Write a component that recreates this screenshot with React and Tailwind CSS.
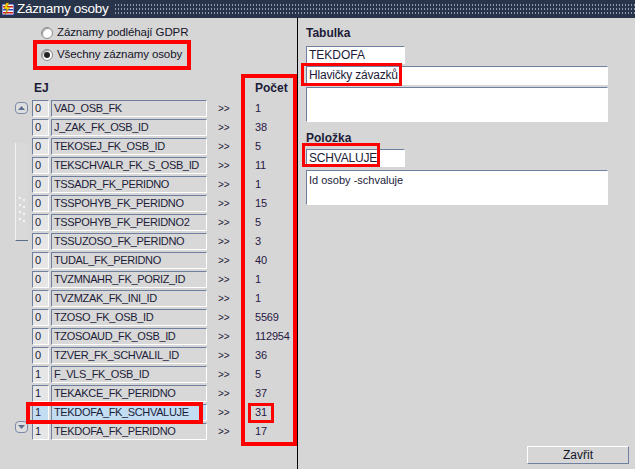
import React from 'react';

const rows = [
    ['0', 'VAD_OSB_FK', '1'],
    ['0', 'J_ZAK_FK_OSB_ID', '38'],
    ['0', 'TEKOSEJ_FK_OSB_ID', '5'],
    ['0', 'TEKSCHVALR_FK_S_OSB_ID', '11'],
    ['0', 'TSSADR_FK_PERIDNO', '1'],
    ['0', 'TSSPOHYB_FK_PERIDNO', '15'],
    ['0', 'TSSPOHYB_FK_PERIDNO2', '5'],
    ['0', 'TSSUZOSO_FK_PERIDNO', '3'],
    ['0', 'TUDAL_FK_PERIDNO', '40'],
    ['0', 'TVZMNAHR_FK_PORIZ_ID', '1'],
    ['0', 'TVZMZAK_FK_INI_ID', '1'],
    ['0', 'TZOSO_FK_OSB_ID', '5569'],
    ['0', 'TZOSOAUD_FK_OSB_ID', '112954'],
    ['0', 'TZVER_FK_SCHVALIL_ID', '36'],
    ['1', 'F_VLS_FK_OSB_ID', '5'],
    ['1', 'TEKAKCE_FK_PERIDNO', '37'],
    ['1', 'TEKDOFA_FK_SCHVALUJE', '31', true],
    ['1', 'TEKDOFA_FK_PERIDNO', '17'],
];

const inset = 'border border-t-[#6f7f9f] border-l-[#6f7f9f] border-b-white border-r-white';

function AppIcon() {
    return (
        <svg width="14" height="14" viewBox="0 0 14 14" className="shrink-0">
            <rect x="1" y="2" width="12" height="11" fill="#ffffff" stroke="#1b2a8c" />
            <rect x="2" y="4" width="10" height="1.5" fill="#d21b1b" />
            <rect x="2" y="7" width="10" height="1.5" fill="#2546c8" />
            <rect x="2" y="10" width="10" height="1.5" fill="#d21b1b" />
            <path d="M5 1 L3 7 L6 7 L4 13 L9 5 L6 5 L8 1 Z" fill="#ffd400" stroke="#8a6a00" strokeWidth="0.5" />
        </svg>
    );
}

function Radio({ checked, label }) {
    return (
        <div className="flex items-center gap-[4px] h-[22px]">
            <span className="w-[12px] h-[12px] rounded-full bg-white border border-[#8a8a8a] flex items-center justify-center shadow-[inset_1px_1px_1px_#9a9a9a]">
                {checked && <span className="w-[6px] h-[6px] rounded-full bg-[#222]" />}
            </span>
            <span className="text-[11.5px] tracking-[-0.1px] text-[#141428]">{label}</span>
        </div>
    );
}

function ScrollButton({ down }) {
    return (
        <div className="w-[13px] h-[12px] rounded-[4px] border border-[#7b8aa8] bg-[#dedede] flex items-center justify-center">
            <svg width="7" height="4" viewBox="0 0 7 4">
                <path d={down ? 'M0 0 L7 0 L3.5 4 Z' : 'M0 4 L7 4 L3.5 0 Z'} fill="#5d6f92" />
            </svg>
        </div>
    );
}

export default function App() {
    return (
        <div className="relative w-[635px] h-[469px] bg-[#d6d6d6] flex flex-col overflow-hidden font-['Liberation_Sans',Arial,sans-serif] text-[#1c1c38]">
            {/* Title bar */}
            <div className="h-[18px] flex items-center bg-[#283449]">
                <div className="flex items-center gap-[2px] pl-[1px] pr-[6px] h-full bg-[#283449]">
                    <AppIcon />
                    <span className="text-white text-[13.5px] leading-none tracking-[-0.3px]">Záznamy osoby</span>
                </div>
                <div className="flex-1 h-[12px] bg-[radial-gradient(circle,#8f9ab0_0.8px,transparent_1px)] bg-[length:3px_4px]" />
            </div>

            <div className="flex flex-1">
                {/* Left panel */}
                <div className="w-[298px] border-r border-black flex flex-col">
                    <div className="pl-[41px] pt-[4px]">
                        <Radio label="Záznamy podléhají GDPR" />
                        <Radio checked label="Všechny záznamy osoby" />
                    </div>

                    <div className="mt-[14px] h-[16px] flex items-center pl-[34px] text-[12px] font-bold">
                        <span className="w-[221px]">EJ</span>
                        <span>Počet</span>
                    </div>

                    <div className="mt-[4px] flex pl-[15px]">
                        {/* scrollbar */}
                        <div className="w-[13px] flex flex-col">
                            <div className="mt-[2px]"><ScrollButton /></div>
                            <div className="mt-[29px] h-[98px] border-l border-l-[#f2f2f2] border-b border-b-[#5b6b8b] bg-[#d9d9d9] flex flex-col items-center pt-[54px]">
                                <div className="grid grid-cols-2 gap-x-[2px] gap-y-[3px]">
                                    {Array.from({ length: 8 }).map((_, i) => (
                                        <span key={i} className={`w-[2px] h-[2px] bg-[#f4f4f4] ${i % 2 ? 'mt-[2px]' : ''}`} />
                                    ))}
                                </div>
                            </div>
                            <div className="flex-1" />
                            <div className="mb-[7px]"><ScrollButton down /></div>
                        </div>

                        <div className="ml-[4px] flex flex-col gap-[2px]">
                            {rows.map(([ej, name, count, sel]) => (
                                <div key={name} className="flex items-center h-[17px] text-[11px]">
                                    <div className={`w-[17px] h-full ${inset} ${sel ? 'bg-[#c2dcf2]' : 'bg-[#e6e6e6]'} pl-[2px] leading-[15px]`}>{ej}</div>
                                    <div className={`ml-[2px] w-[156px] h-full ${inset} ${sel ? 'bg-[#c2dcf2]' : 'bg-[#d8d8d8]'} pl-[2px] leading-[15px] tracking-[-0.35px] whitespace-nowrap overflow-hidden`}>{name}</div>
                                    <span className="ml-[11px] w-[37px] text-[10px]">&gt;&gt;</span>
                                    <span className="text-[#281844] tracking-[-0.2px]">{count}</span>
                                </div>
                            ))}
                        </div>
                    </div>
                </div>

                {/* Right panel */}
                <div className="flex-1 flex flex-col pl-[8px] pt-[8px]">
                    <div className="h-[14px] text-[12px] font-bold leading-[14px]">Tabulka</div>
                    <div className={`mt-[6px] w-[99px] h-[18px] bg-white ${inset} pl-[2px] text-[12px] leading-[16px]`}>TEKDOFA</div>
                    <div className={`mt-[2px] w-[302px] h-[19px] bg-white ${inset} pl-[2px] text-[12px] leading-[17px] tracking-[-0.2px]`}>Hlavičky závazků</div>
                    <div className={`mt-[2px] w-[302px] h-[35px] bg-white ${inset}`} />
                    <div className="mt-[9px] h-[14px] text-[12px] font-bold leading-[14px]">Položka</div>
                    <div className={`mt-[4px] w-[99px] h-[18px] bg-white ${inset} pl-[2px] text-[12px] leading-[16px] tracking-[-0.2px]`}>SCHVALUJE</div>
                    <div className={`mt-[3px] w-[302px] h-[35px] bg-white ${inset} pl-[2px] pt-[2px] text-[11px] leading-[14px]`}>Id osoby -schvaluje</div>
                    <div className="flex-1" />
                    <div className="flex justify-end pr-[6px] pb-[5px]">
                        <button className="w-[102px] h-[18px] border border-t-white border-l-white border-b-[#6f7f9f] border-r-[#6f7f9f] bg-[#d6d6d6] text-[12px] leading-[16px] text-[#141428]">Zavřit</button>
                    </div>
                </div>
            </div>

            {/* Red highlight annotations */}
            <div className="absolute left-[33px] top-[40px] w-[158px] h-[30px] border-4 border-[#ff0000]" />
            <div className="absolute left-[241px] top-[74px] w-[56px] h-[372px] border-4 border-[#ff0000]" />
            <div className="absolute left-[26px] top-[402px] w-[177px] h-[22px] border-4 border-[#ff0000]" />
            <div className="absolute left-[248px] top-[403px] w-[26px] h-[20px] border-[3px] border-[#ff0000]" />
            <div className="absolute left-[301px] top-[63px] w-[101px] h-[23px] border-[3px] border-[#ff0000]" />
            <div className="absolute left-[302px] top-[143px] w-[78px] h-[24px] border-[3px] border-[#ff0000]" />
        </div>
    );
}
